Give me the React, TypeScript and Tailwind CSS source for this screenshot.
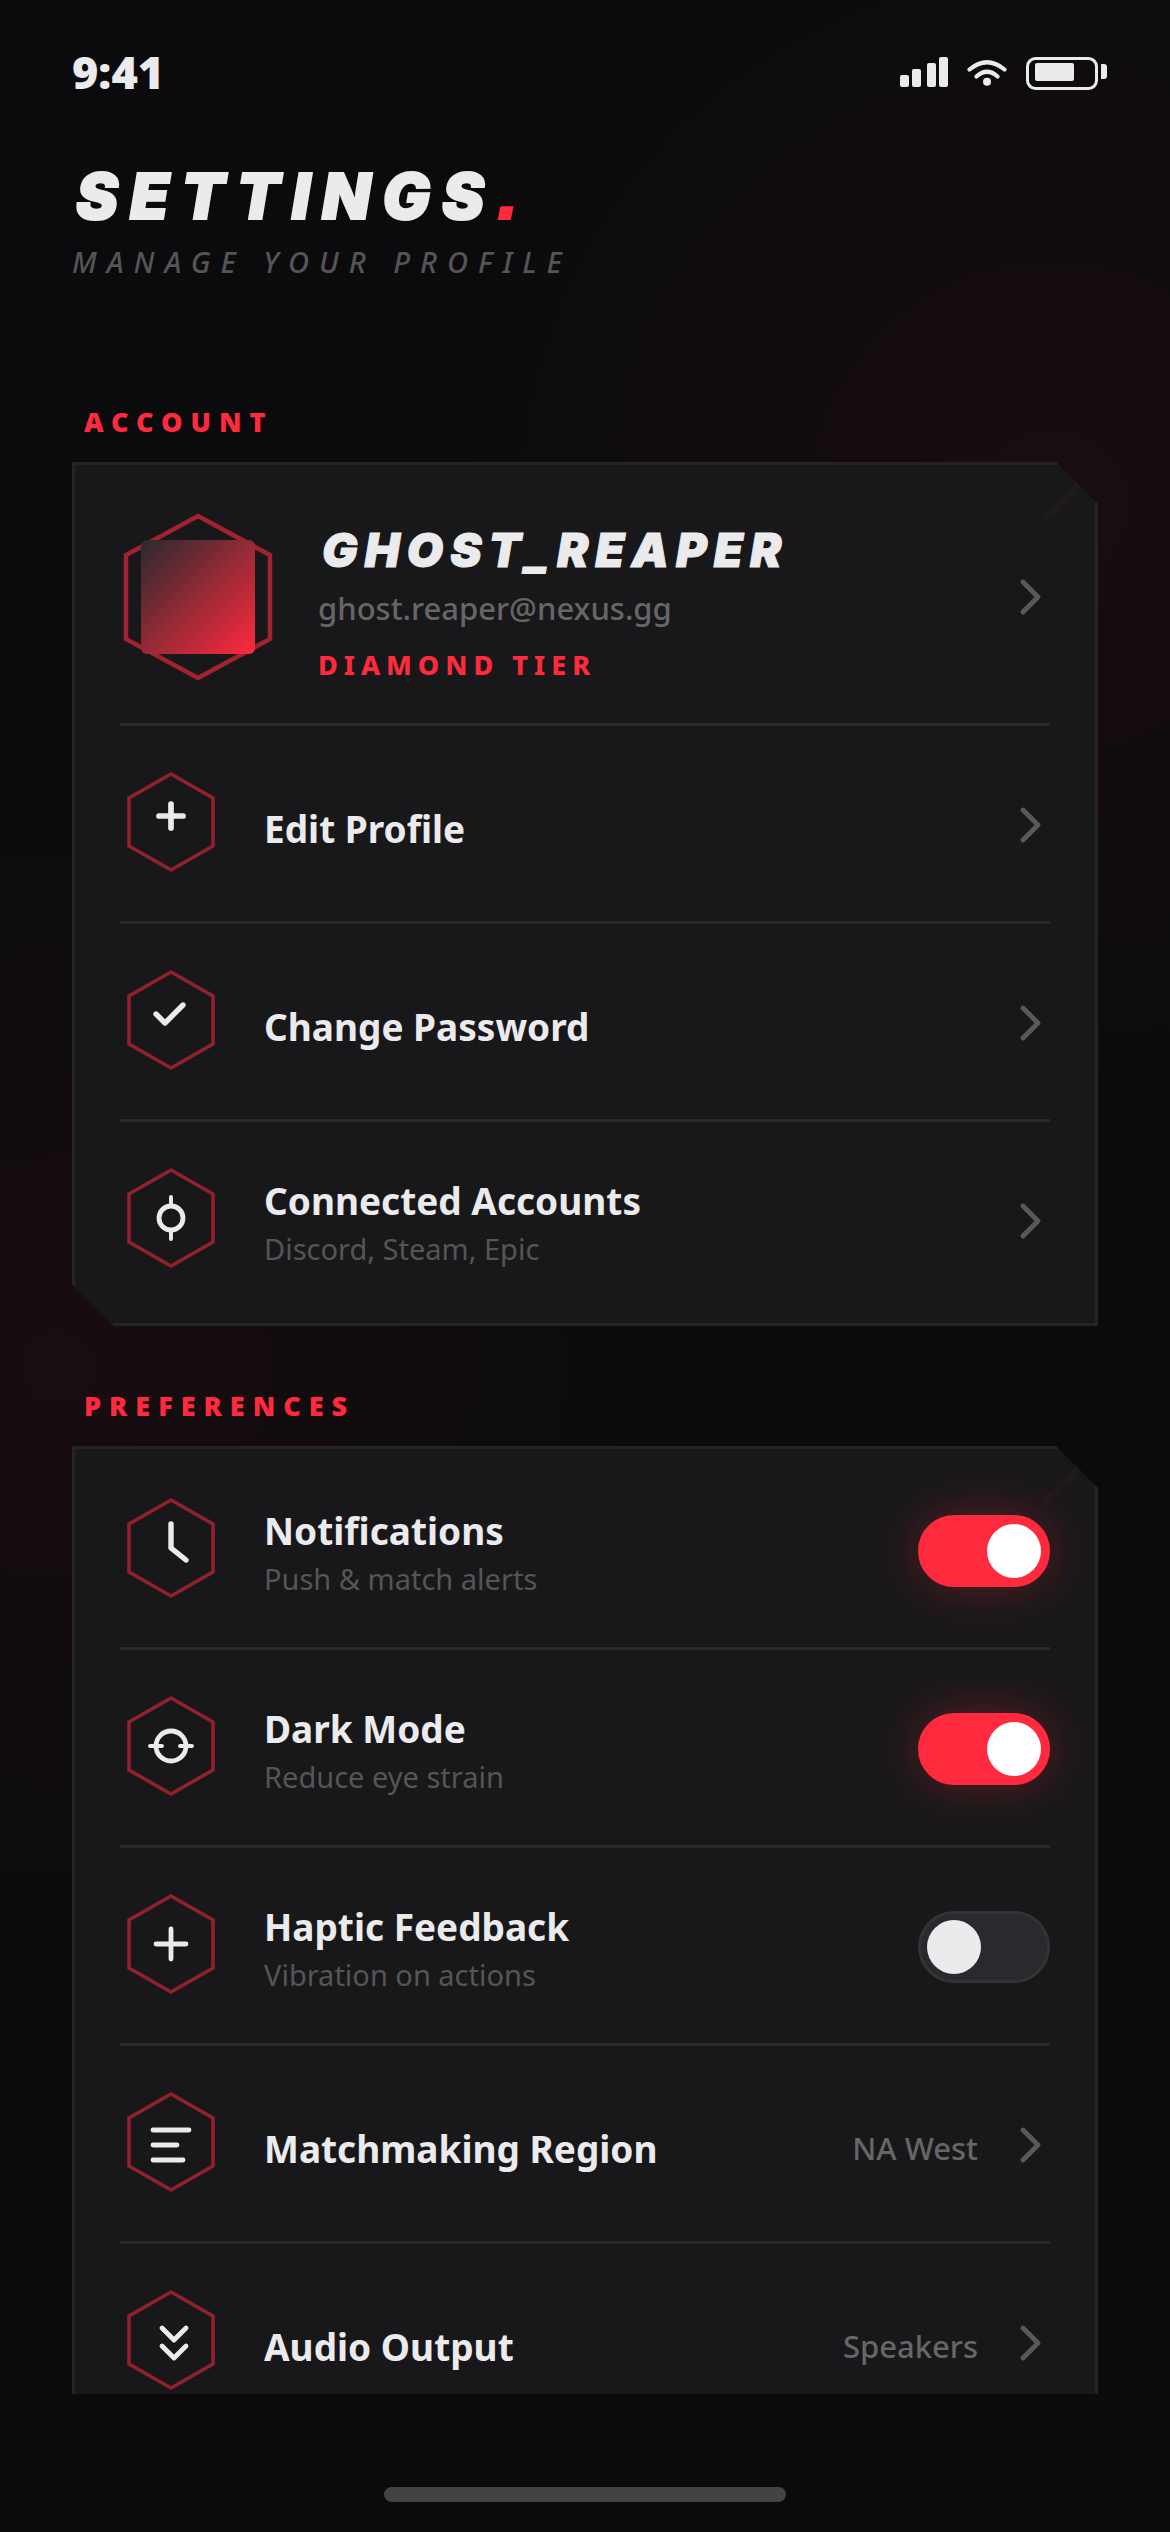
import { useState } from 'react';
import type { ReactNode } from 'react';

interface RowProps {
  icon: ReactNode;
  title: string;
  subtitle?: string;
  value?: string;
}

interface ToggleRowProps extends RowProps {
  id: string;
  defaultOn?: boolean;
}

const ROW = 'flex w-full gap-[42px] border-b-[3px] border-[#29292b] pt-[45px] pb-[42px] text-left last:border-transparent';

function HexIcon({ children }: { children: ReactNode }) {
  return (
    <svg viewBox="0 0 34 34" className="size-[102px] shrink-0" fill="none" aria-hidden="true">
      <path d="M17 1l14 8v16l-14 8-14-8V9z" stroke="#ff2a3d" strokeOpacity="0.53" strokeWidth="1.2" />
      <g stroke="#ebebed" strokeWidth="1.6" strokeLinecap="round" strokeLinejoin="round">
        {children}
      </g>
    </svg>
  );
}

function Chevron() {
  return (
    <svg viewBox="0 0 12 12" className="size-9 shrink-0" fill="none" aria-hidden="true">
      <path d="M3 1l5 5-5 5" stroke="#59595b" strokeWidth="1.6" strokeLinecap="round" strokeLinejoin="round" />
    </svg>
  );
}

function RowText({ title, subtitle }: { title: string; subtitle?: string }) {
  return (
    <span className={subtitle ? 'block' : 'block pt-1.5'}>
      <span className="block text-[37px] leading-[53px] font-bold text-[#ebebed]">{title}</span>
      {subtitle && <span className="mt-0.5 block text-[29px] leading-[39px] text-[#555555]">{subtitle}</span>}
    </span>
  );
}

function LinkRow({ icon, title, subtitle, value }: RowProps) {
  return (
    <button type="button" className={ROW}>
      {icon}
      <span className="flex h-[108px] flex-1 items-center justify-between">
        <RowText title={title} subtitle={subtitle} />
        <span className="flex items-center gap-9">
          {value && <span className="pt-1.5 text-[31px] leading-[48px] font-medium text-[#666666]">{value}</span>}
          <Chevron />
        </span>
      </span>
    </button>
  );
}

function ToggleRow({ id, icon, title, subtitle, defaultOn = false }: ToggleRowProps) {
  const [on, setOn] = useState(defaultOn);

  return (
    <div className={ROW}>
      {icon}
      <div className="flex h-[108px] flex-1 items-center justify-between">
        <label htmlFor={id}>
          <RowText title={title} subtitle={subtitle} />
        </label>
        <input
          id={id}
          type="checkbox"
          role="switch"
          checked={on}
          onChange={(e) => setOn(e.target.checked)}
          className="h-[72px] w-[132px] shrink-0 appearance-none rounded-full border-[3px] border-[#333333] bg-[#2a2a2e] p-1.5 before:block before:size-[54px] before:rounded-full before:bg-[#ebebed] checked:border-[#ff2a3d] checked:bg-[#ff2a3d] checked:shadow-[0_0_48px_rgba(255,42,61,0.3)] checked:before:translate-x-[60px] checked:before:bg-white"
        />
      </div>
    </div>
  );
}

function Section({ title, children }: { title: string; children: ReactNode }) {
  return (
    <section>
      <h2 className="mb-[22px] pl-3 text-[27px] leading-9 font-black tracking-[8px] text-[#ff2a3d] uppercase">{title}</h2>
      <div className="relative border-[3px] border-[#242426] bg-[#18181a] px-[45px] py-[3px] [clip-path:polygon(0_0,calc(100%-42px)_0,100%_42px,100%_100%,42px_100%,0_calc(100%-42px))]">
        <div className="pointer-events-none absolute top-0 right-0 size-[54px] bg-[linear-gradient(135deg,transparent_50%,rgba(255,42,61,0.05)_50%,transparent_60%)]" />
        {children}
      </div>
    </section>
  );
}

function StatusBar() {
  return (
    <div className="flex h-36 shrink-0 items-center justify-between pr-[63px] pl-[72px] text-[#ebebed]">
      <span className="text-[45px] leading-[60px] font-black">9:41</span>
      <div className="flex items-center gap-[18px]">
        <svg viewBox="0 0 48 36" className="h-9 w-12" fill="currentColor" aria-label="Signal">
          <rect x="0" y="21" width="9" height="12" rx="2" />
          <rect x="12" y="15" width="9" height="18" rx="2" />
          <rect x="27" y="9" width="9" height="24" rx="2" />
          <rect x="39" y="3" width="9" height="30" rx="2" />
        </svg>
        <svg viewBox="0 0 42 36" className="h-9 w-[42px]" fill="none" aria-label="Wi-Fi">
          <path d="M3.5 15.5Q21 1 38.5 15.5M10.5 22.5Q21 13 31.5 22.5" stroke="currentColor" strokeWidth="4.2" strokeLinecap="round" />
          <circle cx="21" cy="27.7" r="4" fill="currentColor" />
        </svg>
        <svg viewBox="0 0 81 36" className="h-9 w-[81px]" fill="none" aria-label="Battery">
          <rect x="1.5" y="4.5" width="69" height="30" rx="8" stroke="currentColor" strokeWidth="3" />
          <rect x="9" y="9" width="39" height="18" rx="2" fill="currentColor" />
          <path d="M75 10h3a3 3 0 0 1 3 3v9a3 3 0 0 1-3 3h-3z" fill="currentColor" />
        </svg>
      </div>
    </div>
  );
}

function ProfileRow() {
  return (
    <button type="button" className={ROW}>
      <svg viewBox="0 0 52 56" className="h-[168px] w-[156px] shrink-0" fill="none" aria-hidden="true">
        <defs>
          <linearGradient id="avatar" x1="0" y1="0" x2="1" y2="1">
            <stop offset="0" stopColor="#2a2a2e" />
            <stop offset="1" stopColor="#ff2a3d" />
          </linearGradient>
        </defs>
        <path d="M26 1l24 13v28l-24 13-24-13V14z" stroke="#ff2a3d" strokeOpacity="0.6" strokeWidth="1.5" />
        <rect x="7" y="9" width="38" height="38" rx="2" fill="url(#avatar)" />
      </svg>
      <span className="flex h-[168px] flex-1 items-center justify-between">
        <span className="block pt-1.5">
          <span className="block pl-1 font-['Inter',sans-serif] text-[47px] leading-[60px] font-black tracking-[7px] text-[#ebebed] italic [-webkit-text-stroke:1px_#ebebed]">
            GHOST_REAPER
          </span>
          <span className="mt-1 block text-[31px] leading-[48px] font-medium text-[#666666]">ghost.reaper@nexus.gg</span>
          <span className="mt-[18px] block text-[27px] leading-[30px] font-extrabold tracking-[6px] text-[#ff2a3d]">DIAMOND TIER</span>
        </span>
        <Chevron />
      </span>
    </button>
  );
}

export default function App() {
  return (
    <div className="flex h-screen flex-col bg-[#0b0b0d] bg-[radial-gradient(circle_at_90%_20%,rgba(255,42,61,0.06),transparent_600px),radial-gradient(circle_at_5%_54%,rgba(255,42,61,0.055),transparent_580px)] font-['Noto_Sans',sans-serif]">
      <StatusBar />
      <header className="shrink-0 px-[72px] pt-4">
        <h1 className="pl-1 font-['Inter',sans-serif] text-[63px] leading-[72px] font-black tracking-[12px] text-[#ebebed] italic [-webkit-text-stroke:2px]">
          SETTINGS
          <span className="font-['DejaVu_Sans',sans-serif] leading-none font-bold text-[#ff2a3d] [text-shadow:0_0_60px_rgba(255,42,61,0.4)]">.</span>
        </h1>
        <p className="mt-2 text-[29px] leading-[44px] font-medium tracking-[10px] text-[#555555] italic">MANAGE YOUR PROFILE</p>
      </header>

      <main className="mt-[60px] flex min-h-0 flex-1 flex-col gap-[62px] overflow-y-auto px-[72px] pt-[60px] [scrollbar-width:none]">
        <Section title="Account">
          <ProfileRow />
          <LinkRow icon={<HexIcon><path d="M17 11v8M13 15h8" strokeWidth="1.9" /></HexIcon>} title="Edit Profile" />
          <LinkRow icon={<HexIcon><path d="M12 15l3 3 6-6" strokeWidth="1.8" /></HexIcon>} title="Change Password" />
          <LinkRow
            icon={
              <HexIcon>
                <circle cx="17" cy="17" r="4" />
                <path d="M17 10v3M17 21v3" strokeWidth="1.3" />
              </HexIcon>
            }
            title="Connected Accounts"
            subtitle="Discord, Steam, Epic"
          />
        </Section>

        <Section title="Preferences">
          <ToggleRow
            id="notifications"
            icon={<HexIcon><path d="M17 9v8l5 4" strokeWidth="1.8" /></HexIcon>}
            title="Notifications"
            subtitle="Push & match alerts"
            defaultOn
          />
          <ToggleRow
            id="dark-mode"
            icon={
              <HexIcon>
                <circle cx="17" cy="17" r="5" />
                <path d="M10 17h4M20 17h4" strokeWidth="1.3" />
              </HexIcon>
            }
            title="Dark Mode"
            subtitle="Reduce eye strain"
            defaultOn
          />
          <ToggleRow
            id="haptics"
            icon={<HexIcon><path d="M17 12v10M12 17h10" /></HexIcon>}
            title="Haptic Feedback"
            subtitle="Vibration on actions"
          />
          <LinkRow
            icon={<HexIcon><path d="M11 13h12M11 18h8M11 23h10" /></HexIcon>}
            title="Matchmaking Region"
            value="NA West"
          />
          <LinkRow
            icon={<HexIcon><path d="M14 13l4 4 4-4M14 19l4 4 4-4" /></HexIcon>}
            title="Audio Output"
            value="Speakers"
          />
        </Section>
      </main>

      {/* Home indicator */}
      <div className="flex h-[138px] shrink-0 items-end justify-center pb-[30px]">
        <div className="h-[15px] w-[402px] rounded-lg bg-[#434343]" />
      </div>
    </div>
  );
}
